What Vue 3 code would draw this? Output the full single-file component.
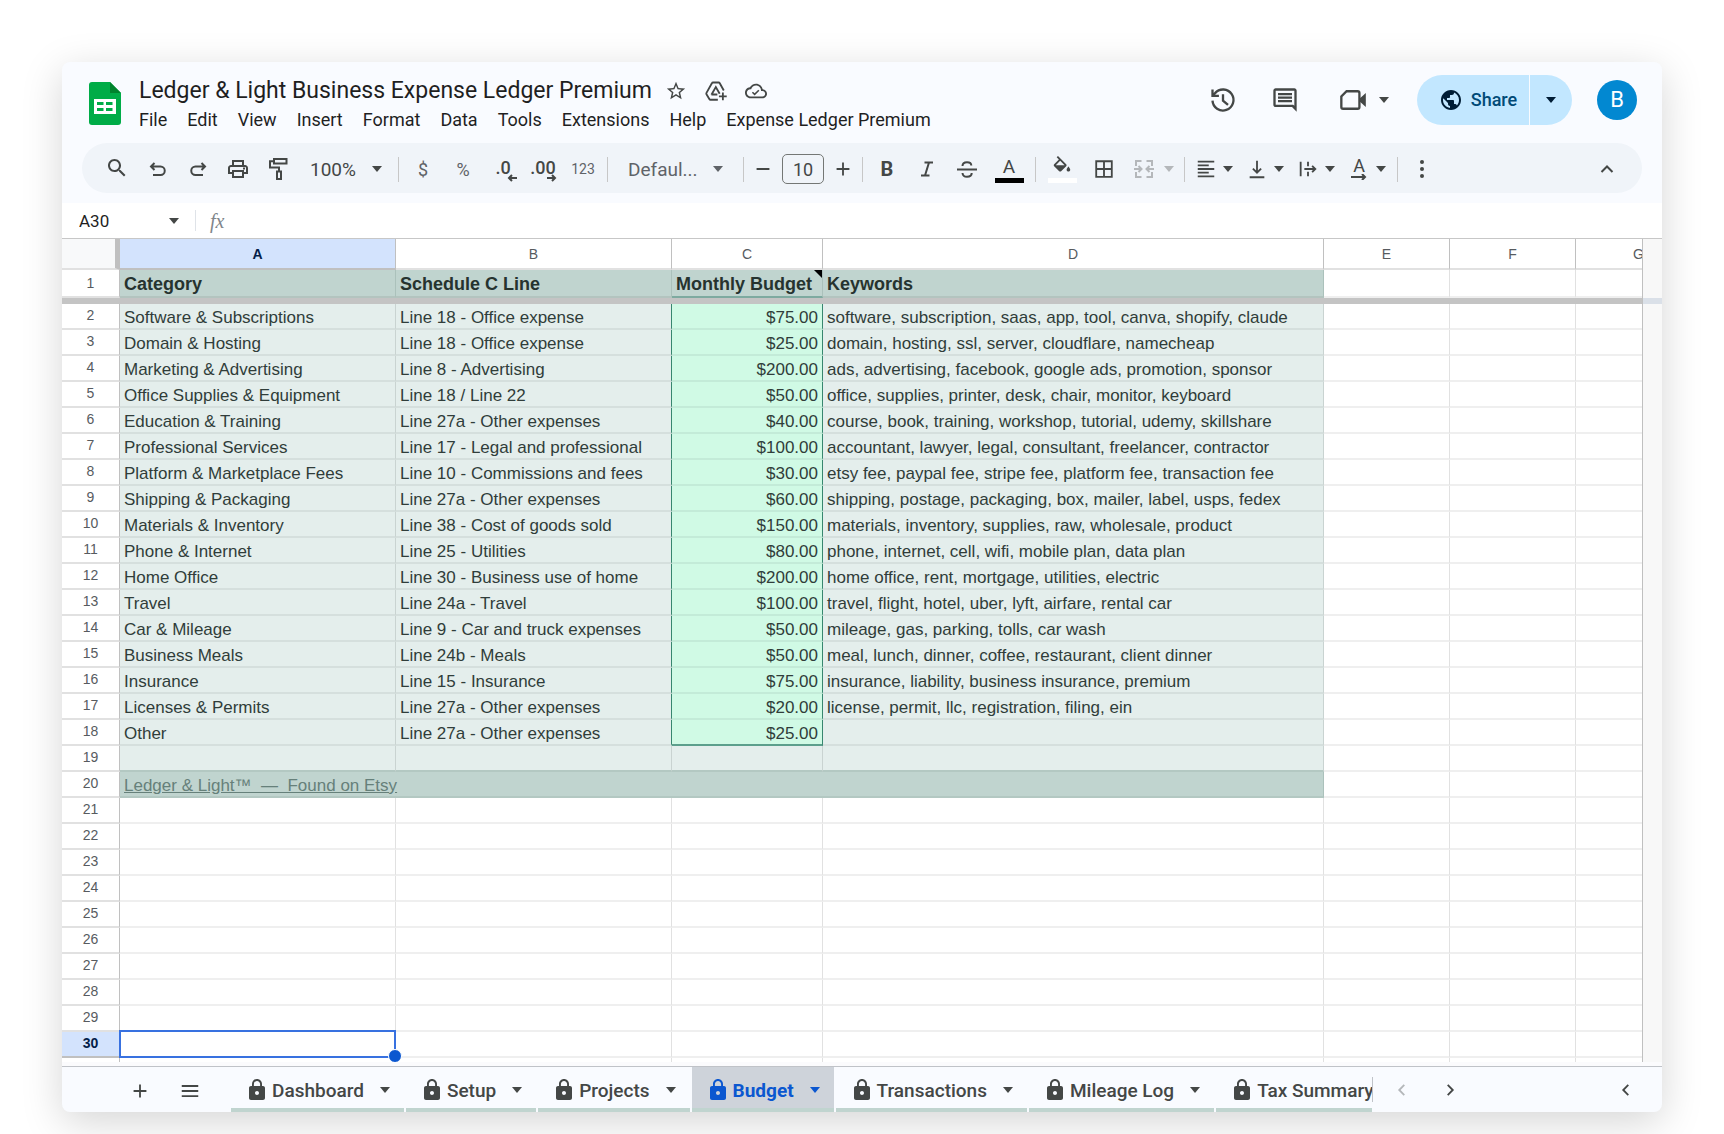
<script setup>
import { h, ref } from 'vue';

// outlined icons are stroked, solid ones are filled (all on a 24x24 box)
const icons = {
    star: { fill: 'M22 9.24l-7.19-.62L12 2 9.19 8.63 2 9.24l5.46 4.73L5.82 21 12 17.27 18.18 21l-1.63-7.03L22 9.24zM12 15.4l-3.76 2.27 1-4.28-3.32-2.88 4.38-.38L12 6.1l1.71 4.04 4.38.38-3.32 2.88 1 4.28L12 15.4z' },
    drive: { stroke: 'M14 21.500H6a1.500 1.500 0 0 1-1.300-.8L1.600 15.500a1.500 1.500 0 0 1 0-1.500L7.500 3.500A1.500 1.500 0 0 1 8.800 2.700h6a1.500 1.500 0 0 1 1.300.8L20.500 11.500M7 16l4.800-8.200L16 15M7 15.800h6.500M19.500 13.500v8.500M15.200 17.800h8.500' },
    cloud: { fill: 'M19.350 10.040C18.670 6.590 15.640 4 12 4 9.110 4 6.600 5.640 5.350 8.040 2.340 8.360 0 10.910 0 14c0 3.310 2.690 6 6 6h13c2.760 0 5-2.240 5-5 0-2.640-2.050-4.780-4.650-4.960zM19 18H6c-2.210 0-4-1.790-4-4s1.790-4 4-4h.71C7.370 7.690 9.480 6 12 6c3.040 0 5.500 2.460 5.500 5.500v.5H19c1.660 0 3 1.340 3 3s-1.340 3-3 3zm-8.500-3.500l-1.800-1.800-1.200 1.200 3 3 5.200-5.200-1.200-1.200z' },
    history: { stroke: 'M3 12.500a9 9 0 1 0 2.200-6.400M3 3v5.500h5.500M5.500 5.800L3.500 8M12 7v5.500l4.300 3.600' },
    comment: { fill: 'M22 4c0-1.100-.9-2-2-2H4c-1.100 0-2 .9-2 2v12c0 1.100.9 2 2 2h14l4 4V4zM20 4v13l-1-1H4V4h16zM6 12h12v2H6v-2zm0-3h12v2H6V9zm0-3h12v2H6V6z' },
    video: { stroke: 'M6.500 4.500H16a1.500 1.500 0 0 1 1.500 1.500v12a1.500 1.500 0 0 1-1.500 1.500H3.500A1.500 1.500 0 0 1 2 18V9z', fill: 'M17.500 11l5.500-5v12l-5.500-5z' },
    globe: { fill: 'M12 2C6.480 2 2 6.480 2 12s4.480 10 10 10 10-4.480 10-10S17.520 2 12 2zm-1 17.930c-3.950-.49-7-3.850-7-7.930 0-.62.08-1.210.21-1.790L9 15v1c0 1.100.9 2 2 2v1.930zm6.900-2.540c-.26-.81-1-1.390-1.900-1.390h-1v-3c0-.55-.45-1-1-1H8v-2h2c.55 0 1-.45 1-1V7h2c1.100 0 2-.9 2-2v-.41c2.930 1.190 5 4.060 5 7.410 0 2.080-.8 3.970-2.100 5.390z' },
    search: { fill: 'M14.500 13h-.79l-.28-.27C14.410 11.590 15 10.110 15 8.500 15 4.910 12.090 2 8.500 2S2 4.910 2 8.500 4.910 15 8.500 15c1.610 0 3.090-.59 4.230-1.570l.27.28v.79l5 4.990L19.490 18l-4.990-5zm-6 0C6.010 13 4 10.990 4 8.500S6.010 4 8.500 4 13 6.010 13 8.500 10.990 13 8.500 13z' },
    undo: { stroke: 'M8.500 6L5 9.500 8.500 13M5 9.500h9.500a4.200 4.200 0 0 1 0 8.500H7' },
    redo: { stroke: 'M15.500 6L19 9.500 15.500 13M19 9.500H9.500a4.200 4.200 0 0 0 0 8.500H17' },
    print: { fill: 'M19 8h-1V3H6v5H5c-1.660 0-3 1.340-3 3v6h4v4h12v-4h4v-6c0-1.660-1.340-3-3-3zM8 5h8v3H8V5zm8 14H8v-4h8v4zm2-4v-2H6v2H4v-4c0-.55.45-1 1-1h14c.55 0 1 .45 1 1v4h-2zM17 10.500h2v2h-2z' },
    paint: { stroke: 'M8 2h12.500v4.500H8zM8 4.200H4v6.300h9v4M11 14.500h4V22h-4z' },
    strike: { stroke: 'M2 12.500h20M7.500 9c0-2.500 2-3.800 4.500-3.800s4.300 1.200 4.300 3.300M7.500 16c.2 2.400 2 3.800 4.500 3.800 2.800 0 4.700-1.500 4.700-3.800' },
    italic: { stroke: 'M9.500 5.500h8.500M6 18.500h8.500M14 5.500l-4 13' },
    fill: { fill: 'M16.560 8.940L7.620 0 6.210 1.410l2.380 2.380-5.150 5.150c-.59.59-.59 1.540 0 2.120l5.500 5.500c.29.29.68.44 1.060.44s.77-.15 1.060-.44l5.500-5.500c.59-.58.59-1.530 0-2.120zM5.210 10L10 5.210 14.790 10H5.210zM19 11.500s-2 2.170-2 3.500c0 1.100.9 2 2 2s2-.9 2-2c0-1.330-2-3.500-2-3.500z' },
    borders: { stroke: 'M3.500 3.500h17v17h-17zM12 3.500v17M3.500 12h17' },
    merge: { stroke: 'M9.500 4H4v5M4 15v5h5.500M14.500 4H20v5M20 15v5h-5.500M2 12h7M6.500 9l3 3-3 3M22 12h-7M17.500 9l-3 3 3 3' },
    align: { stroke: 'M3 4h18M3 8h12M3 12h18M3 16h12M3 20h18' },
    valign: { stroke: 'M12 3v13M7.500 11.500L12 16l4.500-4.500M4 21h16' },
    wrap: { stroke: 'M4 4v16M12 4v5M12 15v5M8 12h12M16.500 8.500L20 12l-3.500 3.500' },
    up: { stroke: 'M6.500 15l5.500-5.500 5.500 5.500' },
    left: { stroke: 'M14.500 6.500L9 12l5.500 5.500' },
    right: { stroke: 'M9.500 6.500L15 12l-5.500 5.500' },
    minus: { stroke: 'M5 12h14' },
    plus: { stroke: 'M12 5v14M5 12h14' },
    menu: { stroke: 'M3 6.500h18M3 12h18M3 17.500h18' },
    lock: { fill: 'M18 8h-1V6c0-2.760-2.240-5-5-5S7 3.240 7 6v2H6c-1.100 0-2 .9-2 2v10c0 1.100.9 2 2 2h12c1.100 0 2-.9 2-2V10c0-1.100-.9-2-2-2zm-6 9c-1.100 0-2-.9-2-2s.9-2 2-2 2 .9 2 2-.9 2-2 2zm3.100-9H8.900V6c0-1.710 1.390-3.100 3.100-3.100 1.710 0 3.100 1.390 3.100 3.100v2z' },
};

const Icon = ({ name, size = 24 }) => h('svg', { viewBox: '0 0 24 24', width: size, height: size, 'aria-hidden': 'true' }, [
    icons[name].stroke && h('path', { d: icons[name].stroke, fill: 'none', stroke: 'currentColor', 'stroke-width': 2 }),
    icons[name].fill && h('path', { d: icons[name].fill, fill: 'currentColor' }),
]);
Icon.props = ['name', 'size'];

const menus = ['File', 'Edit', 'View', 'Insert', 'Format', 'Data', 'Tools', 'Extensions', 'Help', 'Expense Ledger Premium'];

const columns = ['A', 'B', 'C', 'D', 'E', 'F', 'G'];

// rows 2 - 18 of the sheet
const budget = [
    ['Software & Subscriptions', 'Line 18 - Office expense', '$75.00', 'software, subscription, saas, app, tool, canva, shopify, claude'],
    ['Domain & Hosting', 'Line 18 - Office expense', '$25.00', 'domain, hosting, ssl, server, cloudflare, namecheap'],
    ['Marketing & Advertising', 'Line 8 - Advertising', '$200.00', 'ads, advertising, facebook, google ads, promotion, sponsor'],
    ['Office Supplies & Equipment', 'Line 18 / Line 22', '$50.00', 'office, supplies, printer, desk, chair, monitor, keyboard'],
    ['Education & Training', 'Line 27a - Other expenses', '$40.00', 'course, book, training, workshop, tutorial, udemy, skillshare'],
    ['Professional Services', 'Line 17 - Legal and professional', '$100.00', 'accountant, lawyer, legal, consultant, freelancer, contractor'],
    ['Platform & Marketplace Fees', 'Line 10 - Commissions and fees', '$30.00', 'etsy fee, paypal fee, stripe fee, platform fee, transaction fee'],
    ['Shipping & Packaging', 'Line 27a - Other expenses', '$60.00', 'shipping, postage, packaging, box, mailer, label, usps, fedex'],
    ['Materials & Inventory', 'Line 38 - Cost of goods sold', '$150.00', 'materials, inventory, supplies, raw, wholesale, product'],
    ['Phone & Internet', 'Line 25 - Utilities', '$80.00', 'phone, internet, cell, wifi, mobile plan, data plan'],
    ['Home Office', 'Line 30 - Business use of home', '$200.00', 'home office, rent, mortgage, utilities, electric'],
    ['Travel', 'Line 24a - Travel', '$100.00', 'travel, flight, hotel, uber, lyft, airfare, rental car'],
    ['Car & Mileage', 'Line 9 - Car and truck expenses', '$50.00', 'mileage, gas, parking, tolls, car wash'],
    ['Business Meals', 'Line 24b - Meals', '$50.00', 'meal, lunch, dinner, coffee, restaurant, client dinner'],
    ['Insurance', 'Line 15 - Insurance', '$75.00', 'insurance, liability, business insurance, premium'],
    ['Licenses & Permits', 'Line 27a - Other expenses', '$20.00', 'license, permit, llc, registration, filing, ein'],
    ['Other', 'Line 27a - Other expenses', '$25.00', ''],
];

const emptyRows = [21, 22, 23, 24, 25, 26, 27, 28, 29, 30];
const activeRow = 30;

const tabs = ['Dashboard', 'Setup', 'Projects', 'Budget', 'Transactions', 'Mileage Log', 'Tax Summary'];
const activeTab = ref('Budget');
</script>

<template>
    <main class="page">
        <div class="window">
            <header class="top">
                <svg class="logo" viewBox="0 0 32 43" aria-hidden="true">
                    <path d="M3 0h18l11 11v29a3 3 0 0 1-3 3H3a3 3 0 0 1-3-3V3a3 3 0 0 1 3-3z" fill="#00ac47" />
                    <path d="M21 0l11 11H21z" fill="#00832d" />
                    <path d="M5 17h22v15H5zM8 20v3h6.500v-3zM17 20v3h6.500v-3zM8 26v3h6.500v-3zM17 26v3h6.500v-3z" fill="#fff" fill-rule="evenodd" />
                </svg>
                <div class="doc">
                    <div class="title-row">
                        <h1>Ledger &amp; Light Business Expense Ledger Premium</h1>
                        <button aria-label="Star"><Icon name="star" :size="22" /></button>
                        <button aria-label="Move"><Icon name="drive" :size="22" /></button>
                        <button aria-label="Saved to cloud"><Icon name="cloud" :size="22" /></button>
                    </div>
                    <nav class="menus">
                        <button v-for="menu in menus" :key="menu">{{ menu }}</button>
                    </nav>
                </div>
                <div class="actions">
                    <button aria-label="Version history"><Icon name="history" :size="28" /></button>
                    <button class="comments" aria-label="Comments"><Icon name="comment" :size="28" /></button>
                    <button class="meet" aria-label="Meet"><Icon name="video" :size="28" /><span class="caret"></span></button>
                    <div class="share">
                        <button class="share-main"><Icon name="globe" />Share</button>
                        <button class="share-more" aria-label="Share options"><span class="caret"></span></button>
                    </div>
                    <button class="avatar">B</button>
                </div>
            </header>

            <div class="toolbar">
                <button aria-label="Search"><Icon name="search" /></button>
                <button aria-label="Undo"><Icon name="undo" /></button>
                <button aria-label="Redo"><Icon name="redo" /></button>
                <button aria-label="Print"><Icon name="print" /></button>
                <button aria-label="Paint format"><Icon name="paint" /></button>
                <label class="pick zoom">
                    <select aria-label="Zoom"><option>100%</option></select>
                    <span class="caret"></span>
                </label>
                <i class="sep"></i>
                <button class="sym">$</button>
                <button class="sym">%</button>
                <button class="decimal" aria-label="Decrease decimal places">.0<svg viewBox="0 0 10 8" width="10" height="8"><path d="M10 4H2M5 1L2 4l3 3" /></svg></button>
                <button class="decimal" aria-label="Increase decimal places">.00<svg viewBox="0 0 10 8" width="10" height="8"><path d="M0 4h8M5 1l3 3-3 3" /></svg></button>
                <button class="formats">123</button>
                <i class="sep"></i>
                <label class="pick font">
                    <select aria-label="Font"><option>Defaul...</option></select>
                    <span class="caret"></span>
                </label>
                <i class="sep"></i>
                <button class="step" aria-label="Smaller"><Icon name="minus" :size="22" /></button>
                <input class="size" type="text" value="10" aria-label="Font size">
                <button class="step" aria-label="Bigger"><Icon name="plus" :size="22" /></button>
                <i class="sep"></i>
                <button class="bold">B</button>
                <button aria-label="Italic"><Icon name="italic" /></button>
                <button aria-label="Strikethrough"><Icon name="strike" /></button>
                <button class="color text-color">A<span class="bar"></span></button>
                <i class="sep"></i>
                <button class="color fill-color" aria-label="Fill color"><Icon name="fill" :size="22" /><span class="bar"></span></button>
                <button aria-label="Borders"><Icon name="borders" :size="22" /></button>
                <button class="drop merge" aria-label="Merge cells" disabled><Icon name="merge" /><span class="caret"></span></button>
                <i class="sep"></i>
                <button class="drop" aria-label="Horizontal align"><Icon name="align" :size="22" /><span class="caret"></span></button>
                <button class="drop" aria-label="Vertical align"><Icon name="valign" :size="22" /><span class="caret"></span></button>
                <button class="drop" aria-label="Text wrapping"><Icon name="wrap" :size="22" /><span class="caret"></span></button>
                <button class="drop rotate" aria-label="Text rotation"><span class="turn">A<svg viewBox="0 0 16 6" width="16" height="6"><path d="M0 3h14M11 0l3 3-3 3" /></svg></span><span class="caret"></span></button>
                <i class="sep"></i>
                <button class="dots" aria-label="More"><i></i><i></i><i></i></button>
                <button class="collapse" aria-label="Hide the menus"><Icon name="up" /></button>
            </div>

            <div class="formula">
                <input class="name-box" type="text" value="A30" aria-label="Name box">
                <span class="caret"></span>
                <i class="sep"></i>
                <label class="fx" for="fx">fx</label>
                <input id="fx" class="fx-input" type="text">
            </div>

            <div class="grid">
                <div class="cells">
                    <table>
                        <colgroup>
                            <col class="w-head"><col class="w-a"><col class="w-a"><col class="w-c"><col class="w-d"><col class="w-e"><col class="w-e"><col class="w-e">
                        </colgroup>
                        <thead>
                            <tr class="letters">
                                <th class="corner"></th>
                                <th v-for="col in columns" :key="col" :class="{ active: col === 'A' }">{{ col }}</th>
                            </tr>
                            <tr class="titles">
                                <th class="num">1</th>
                                <th>Category</th>
                                <th>Schedule C Line</th>
                                <th class="noted">Monthly Budget</th>
                                <th>Keywords</th>
                                <td></td><td></td><td></td>
                            </tr>
                            <tr class="freeze"><td colspan="8"></td></tr>
                        </thead>
                        <tbody>
                            <tr v-for="(row, i) in budget" :key="i" class="data">
                                <th class="num">{{ i + 2 }}</th>
                                <td v-for="(cell, j) in row" :key="j" :class="{ before: j === 1, money: j === 2 }">{{ cell }}</td>
                                <td></td><td></td><td></td>
                            </tr>
                            <tr class="data blank">
                                <th class="num">19</th>
                                <td v-for="n in 7" :key="n"></td>
                            </tr>
                            <tr class="footer">
                                <th class="num">20</th>
                                <td colspan="4"><a href="#">Ledger &amp; Light™ &nbsp;—&nbsp; Found on Etsy</a></td>
                                <td></td><td></td><td></td>
                            </tr>
                            <tr v-for="n in emptyRows" :key="n" :class="{ current: n === activeRow }">
                                <th class="num">{{ n }}</th>
                                <td v-for="c in 7" :key="c" :class="{ selected: n === activeRow && c === 1 }"></td>
                            </tr>
                            <tr class="cut"><th class="num"></th><td v-for="c in 7" :key="c"></td></tr>
                        </tbody>
                    </table>
                </div>
                <div class="scroll"><span></span></div>
            </div>

            <footer class="sheets">
                <button class="tool" aria-label="Add sheet"><Icon name="plus" :size="22" /></button>
                <button class="tool" aria-label="All sheets"><Icon name="menu" :size="22" /></button>
                <div class="tabs">
                    <button v-for="tab in tabs" :key="tab" class="tab" :class="{ active: tab === activeTab }" @click="activeTab = tab">
                        <Icon name="lock" />
                        <span>{{ tab }}</span>
                        <span class="caret"></span>
                    </button>
                </div>
                <button class="nav off" aria-label="Scroll left"><Icon name="left" :size="22" /></button>
                <button class="nav" aria-label="Scroll right"><Icon name="right" :size="22" /></button>
                <button class="nav side" aria-label="Show side panel"><Icon name="left" :size="22" /></button>
            </footer>
        </div>
    </main>
</template>

<style>
body {
    background: #fff;
}
</style>

<style scoped>
* {
    box-sizing: border-box;
}

.page {
    padding: 62px 62px 22px;
    font-family: Roboto, "Liberation Sans", sans-serif;
    color: #1f1f1f;
}

.window {
    background: #f9fbff;
    border-radius: 8px;
    overflow: hidden;
    box-shadow: 0 10px 40px rgba(0, 0, 0, 0.17);
}

button,
input,
select {
    font: inherit;
    color: inherit;
    border: none;
    background: none;
    padding: 0;
    margin: 0;
}

button {
    display: flex;
    align-items: center;
    justify-content: center;
    flex: none;
}

svg {
    display: block;
    flex: none;
}

.caret {
    flex: none;
    border: 5px solid transparent;
    border-top: 6px solid currentColor;
    border-bottom: none;
}

/* header */
.top {
    display: flex;
    height: 81px;
    padding: 0 25px 0 27px;
    color: #444746;
}

.logo {
    width: 32px;
    height: 43px;
    margin: 20px 18px 0 0;
}

.doc {
    padding-top: 13px;
    white-space: nowrap;
}

.title-row {
    display: flex;
    align-items: center;
    height: 32px;
}

h1 {
    margin: 0 4px 0 0;
    font-size: 23px;
    line-height: 32px;
    font-weight: 400;
    color: #1f1f1f;
}

.title-row button {
    width: 40px;
}

.menus {
    display: flex;
    gap: 20px;
    height: 26px;
    font-size: 18px;
    line-height: 26px;
    color: #1f1f1f;
}

.actions {
    display: flex;
    align-items: center;
    height: 75px;
    margin-left: auto;
}

.actions > button {
    margin-right: 34px;
}

.actions > .comments {
    margin-right: 40px;
}

.actions > .meet {
    gap: 12px;
    margin-right: 28px;
}

.share {
    display: flex;
    height: 50px;
    margin-right: 25px;
    border-radius: 25px;
    background: #c2e7ff;
    color: #001d35;
    overflow: hidden;
}

.share-main {
    gap: 8px;
    width: 113px;
    padding-left: 10px;
    border-right: 1px solid #f9fbff;
    font-size: 18px;
    font-weight: 500;
    color: #004a77;
}

.share-main svg {
    color: #001d35;
}

.share-more {
    width: 42px;
}

.actions > .avatar {
    width: 40px;
    height: 40px;
    margin: 0;
    border-radius: 50%;
    background: #0288d1;
    color: #fff;
    font-size: 22px;
}

/* toolbar */
.toolbar {
    display: flex;
    align-items: center;
    height: 50px;
    margin: 0 20px;
    padding: 2px 15px 0 16px;
    border-radius: 25px;
    background: #f0f4f9;
    color: #444746;
}

.toolbar button {
    width: 40px;
    height: 40px;
}

.sep {
    flex: none;
    width: 1px;
    height: 25px;
    margin: 0 4px;
    background: #c7c7c7;
}

.pick {
    display: flex;
    align-items: center;
    padding: 0 12px;
    font-size: 19px;
}

.pick select {
    appearance: none;
    flex: 1;
    min-width: 0;
    overflow: hidden;
}

.zoom {
    width: 96px;
}

.font {
    width: 127px;
    padding: 0 16px;
    color: #5f6368;
}

.toolbar .sym {
    font-size: 18px;
    color: #5f6368;
}

.toolbar .decimal {
    position: relative;
    font-size: 18px;
    font-weight: 500;
    padding-bottom: 4px;
}

.decimal svg {
    position: absolute;
    right: 6px;
    bottom: 7px;
}

.decimal path,
.turn path {
    fill: none;
    stroke: currentColor;
    stroke-width: 2;
}

.toolbar .formats {
    font-size: 14px;
    color: #5f6368;
}

.toolbar .step {
    width: 30px;
}

.size {
    width: 42px;
    height: 30px;
    margin: 0 4px;
    border: 1px solid #747775;
    border-radius: 5px;
    text-align: center;
    font-size: 18px;
}

.toolbar .bold {
    font-size: 20px;
    font-weight: 700;
}

.toolbar .color {
    flex-direction: column;
    width: 44px;
    font-size: 19px;
    line-height: 22px;
}

.bar {
    width: 29px;
    height: 5px;
    background: #000;
}

.fill-color .bar {
    background: #fff;
}

.toolbar .drop {
    justify-content: flex-start;
    gap: 6px;
    width: 51px;
    padding-left: 6px;
}

.toolbar .merge {
    gap: 8px;
    width: 56px;
    padding-left: 8px;
    color: #b4b7ba;
}

.turn {
    display: flex;
    flex-direction: column;
    align-items: center;
    width: 22px;
    font-size: 18px;
    line-height: 16px;
}

.toolbar .dots {
    flex-direction: column;
    gap: 3px;
}

.dots i {
    width: 4px;
    height: 4px;
    border-radius: 50%;
    background: currentColor;
}

.toolbar .collapse {
    margin-left: auto;
}

/* name box and formula */
.formula {
    display: flex;
    align-items: center;
    height: 36px;
    margin-top: 10px;
    padding-left: 17px;
    border-bottom: 1px solid #c7c7c7;
    background: #fff;
    color: #444746;
}

.name-box {
    width: 90px;
    font-size: 17px;
    color: #1f1f1f;
}

.formula .sep {
    height: 21px;
    margin: 0 14px 0 16px;
    background: #dfe3e8;
}

.fx {
    font: italic 20px/24px "Liberation Serif", serif;
    color: #80868b;
}

.fx-input {
    flex: 1;
}

/* spreadsheet */
.grid {
    display: flex;
    padding-bottom: 4px;
    background: #fbfbfd;
    font-family: "Liberation Sans", Arial, sans-serif;
}

.cells {
    flex: 1;
    min-width: 0;
    overflow: hidden;
    background: #fff;
}

table {
    width: 1640px;
    table-layout: fixed;
    border-collapse: separate;
    border-spacing: 0;
}

.w-head { width: 58px; }
.w-a { width: 276px; }
.w-c { width: 151px; }
.w-d { width: 501px; }
.w-e { width: 126px; }

tr {
    height: 26px;
}

th,
td {
    padding: 4px 4px 0;
    border-right: 1px solid #e1e1e1;
    border-bottom: 2px solid #efefef;
    font-size: 17px;
    line-height: 20px;
    text-align: left;
    white-space: nowrap;
    color: #303d3a;
}

.num {
    padding: 0 0 2px;
    border-right-color: #c0c0c0;
    border-bottom-color: #e1e1e1;
    font-size: 14px;
    font-weight: 400;
    text-align: center;
    color: #575b5f;
}

.letters {
    height: 31px;
}

.letters th {
    padding: 0;
    border-right-color: #c0c0c0;
    border-bottom-color: #e1e1e1;
    font-size: 14px;
    font-weight: 400;
    text-align: center;
    color: #575b5f;
}

.letters .corner {
    border-right: 5px solid #c0c0c0;
    background: #f8f9fa;
}

.letters .active {
    background: #d3e3fd;
    border-bottom-color: #c0c0c0;
    color: #041e49;
    font-weight: 700;
}

.titles {
    height: 28px;
}

.titles .num {
    padding: 0;
}

.titles th:not(.num) {
    padding-top: 2px;
    border-right-color: #abc1bb;
    border-bottom-color: #b3c4bf;
    background: #c0d4cf;
    font-size: 18px;
    color: #26332f;
}

.titles .noted {
    position: relative;
}

.titles .noted:not(.num) {
    border-bottom-color: #7eaaa0;
}

.noted::after {
    content: "";
    position: absolute;
    top: 0;
    right: 0;
    border-top: 8px solid #000;
    border-left: 8px solid transparent;
}

.freeze {
    height: 6px;
}

.freeze td {
    padding: 0;
    border: none;
    background: #c4c4c4;
    line-height: 0;
}

.data td:nth-child(-n + 5) {
    border-right-color: #c9d3d1;
    border-bottom-color: #d5dfdd;
    background: #e4eeec;
}

.data td.before:nth-child(3),
.data td.money:nth-child(4) {
    border-right-color: #38866f;
}

.data td.money:nth-child(4) {
    border-bottom-color: #c3ebd8;
    background: #d0fae5;
    text-align: right;
}

.data:nth-child(17) td.money:nth-child(4) {
    border-bottom-color: #5c9f8c;
}

.data.blank td:nth-child(-n + 5) {
    border-bottom-color: #b3c8c2;
}

.footer td[colspan] {
    border-right-color: #abc1bb;
    border-bottom-color: #b3c8c2;
    background: #c0d4cf;
}

.footer a {
    color: #66807a;
}

.current .num {
    background: #d3e3fd;
    border-bottom-color: #c0c0c0;
    color: #041e49;
    font-weight: 700;
}

.selected {
    position: relative;
}

.selected::before {
    content: "";
    position: absolute;
    inset: -2px -1px -2px -1px;
    border: 2px solid #3871e0;
}

.selected::after {
    content: "";
    position: absolute;
    right: -7px;
    bottom: -7px;
    width: 12px;
    height: 12px;
    border: 1px solid #fff;
    border-radius: 50%;
    background: #0b57d0;
}

.cut,
.cut th,
.cut td {
    height: 4px;
    padding: 0;
    border-bottom: none;
    line-height: 0;
}

.scroll {
    width: 20px;
    padding-top: 59px;
    border-left: 1px solid #c0c0c0;
    background: #f8f8f8;
}

.scroll span {
    display: block;
    height: 6px;
    background: #dae0e8;
}

/* sheet tabs */
.sheets {
    display: flex;
    align-items: center;
    height: 46px;
    padding-left: 53px;
    border-top: 1px solid #c0c3c8;
    color: #444746;
}

.tool {
    width: 50px;
    height: 44px;
    padding-top: 2px;
}

.tabs {
    display: flex;
    flex: none;
    gap: 2px;
    width: 1141px;
    height: 45px;
    margin-left: 16px;
    overflow: hidden;
}

.tab {
    gap: 3px;
    padding: 5px 14px 0;
    border-bottom: 4px solid #c0d4cf;
    font-size: 19px;
    font-weight: 500;
}

.tab .caret {
    margin-left: 13px;
}

.tab.active {
    background: #ced3da;
    color: #0b57d0;
    font-weight: 700;
}

.nav {
    width: 40px;
    height: 25px;
}

.nav.off {
    width: 58px;
    border-left: 1px solid #c0c3c8;
    color: #b4b7ba;
}

.nav.side {
    margin: 0 16px 0 auto;
}
</style>
